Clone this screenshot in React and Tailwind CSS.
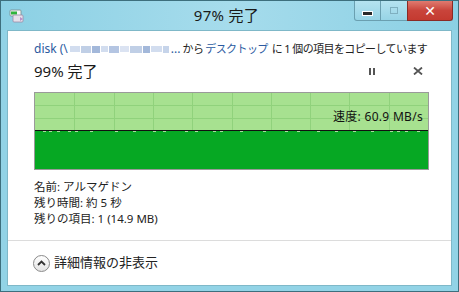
import React from "react";

const F = { fontFamily: '"Noto Sans", "Noto Sans CJK JP", sans-serif' };

function Chart() {
  const w = 393, h = 76, split = 37;
  const vx = [];
  for (let i = 1; i < 10; i++) vx.push(Math.round((w / 10) * i) + 0.5);
  const marks = [8, 14, 22, 33, 40, 55, 80, 98, 118, 128, 150, 160, 178, 185, 205, 228, 250, 262, 282, 300, 318, 336, 355, 362, 370, 382];
  return (
    <svg width={w} height={h} viewBox={`0 0 ${w} ${h}`} className="block">
      <rect x="0" y="0" width={w} height={split} fill="#a7e190" />
      {vx.map((x) => (
        <line key={x} x1={x} y1="0" x2={x} y2={split} stroke="#90d27c" strokeWidth="1" />
      ))}
      <line x1="0" y1="12.5" x2={w} y2="12.5" stroke="#90d27c" strokeWidth="1" />
      <line x1="0" y1="25.5" x2={w} y2="25.5" stroke="#90d27c" strokeWidth="1" />
      <rect x="0" y={split} width={w} height={h - split} fill="#06a823" />
      {marks.map((x) => (
        <rect key={x} x={x} y={split + 1} width="3" height="1" fill="#a8dfa0" />
      ))}
      <line x1="0" y1={split + 0.5} x2={w} y2={split + 0.5} stroke="#111" strokeWidth="1" />
    </svg>
  );
}

export default function App() {
  return (
    <div
      className="w-[459px] h-[292px] flex flex-col border border-[#3d6f7d] bg-[#92d3e6] overflow-hidden"
      style={F}
    >
      {/* Title bar */}
      <div className="h-[29px] shrink-0 grid grid-cols-[1fr_auto_1fr] bg-gradient-to-r from-[#8bd0e4] via-[#a6dcec] to-[#8bd0e4]">
        <div className="flex items-start pl-[8px] pt-[8px]">
          <svg width="16" height="14" viewBox="0 0 16 14">
            <rect x="1" y="1" width="11" height="6" rx="1" fill="#f4f4f4" stroke="#7a8a8a" strokeWidth="0.8" />
            <rect x="2" y="2.5" width="6" height="3" fill="#2fb43a" />
            <rect x="4" y="6" width="10" height="7" rx="1" fill="#e6e0ea" stroke="#9a8aa6" strokeWidth="0.8" />
            <path d="M11 8 L14 10 L11 12 Z" fill="#b890c8" />
          </svg>
        </div>
        <div className="text-[15px] leading-[29px] text-[#1a1a1a] pr-[6px] tracking-[0.3px]">97% 完了</div>
        <div className="flex justify-end items-start pr-[5px]">
          <div className="w-[27px] h-[20px] border border-[#6a9fb0] border-t-0 bg-gradient-to-b from-[#b5e3f0] to-[#97d4e6] rounded-bl-[3px] flex items-center justify-center">
            <div className="w-[9px] h-[3px] bg-[#2a2a2a] mt-[5px] border border-white box-content" />
          </div>
          <div className="w-[26px] h-[20px] border-b border-[#6a9fb0] bg-gradient-to-b from-[#b5e3f0] to-[#97d4e6] flex items-center justify-center">
            <div className="w-[8px] h-[7px] border border-[#7fb0c0]" />
          </div>
          <div className="w-[46px] h-[20px] border border-[#8a2a25] border-t-0 bg-gradient-to-b from-[#e07a70] via-[#c9443b] to-[#c43a30] rounded-br-[3px] flex items-center justify-center">
            <span className="text-white text-[14px] font-bold leading-none" style={{ fontFamily: '"DejaVu Sans", sans-serif' }}>
              ✕
            </span>
          </div>
        </div>
      </div>

      {/* Content */}
      <div className="flex-1 mx-[6px] mb-[5px] bg-white border border-[#7fb8c8] flex flex-col">
        <div className="pl-[26px] pr-[20px] flex-1 flex flex-col">
          <div className="mt-[9px] h-[18px] flex items-center text-[11px] text-[#222] whitespace-nowrap">
            <span className="text-[#2b5aa0] text-[12px]">disk (\</span>
            <span className="flex items-center gap-[1px] ml-[2px] mr-[2px] blur-[0.7px]">
              <span className="w-[10px] h-[6px] bg-[#d2ddef]" />
              <span className="w-[10px] h-[7px] bg-[#c0cfe6]" />
              <span className="w-[8px] h-[7px] bg-[#a3b8da]" />
              <span className="w-[7px] h-[6px] bg-[#d2ddef]" />
              <span className="w-[10px] h-[7px] bg-[#b4c5e2]" />
              <span className="w-[9px] h-[6px] bg-[#dbe3f2]" />
              <span className="w-[12px] h-[7px] bg-[#c0cfe6]" />
              <span className="w-[7px] h-[7px] bg-[#a3b8da]" />
              <span className="w-[11px] h-[6px] bg-[#d2ddef]" />
              <span className="w-[6px] h-[7px] bg-[#c6d4ea]" />
            </span>
            <span className="text-[#2b5aa0] text-[12px] mr-[2px]">...</span>
            <span className="tracking-[-0.6px]">から</span>
            <span className="text-[#2b5aa0] tracking-[-0.6px] ml-[2px]">デスクトップ</span>
            <span className="tracking-[-0.6px] ml-[4px]">に 1 個の項目をコピーしています</span>
          </div>
          <div className="h-[24px] mt-[1px] flex items-center justify-between pr-[6px]">
            <span className="text-[15px] text-[#1a1a1a]">99% 完了</span>
            <div className="flex items-center gap-[38px] mr-[2px]">
              <div className="flex gap-[2px]">
                <div className="w-[2px] h-[7px] bg-[#555]" />
                <div className="w-[2px] h-[7px] bg-[#555]" />
              </div>
              <svg width="10" height="8" viewBox="0 0 10 8">
                <path d="M1 0.5 L9 7.5 M9 0.5 L1 7.5" stroke="#555" strokeWidth="1.8" />
              </svg>
            </div>
          </div>
          <div className="mt-[9px] relative w-[395px] border border-[#9a9a9a]">
            <Chart />
            <div className="absolute right-[5px] top-[16px] text-[12px] leading-[16px] text-[#111] tracking-[0.3px]">速度: 60.9 MB/s</div>
          </div>
          <div className="mt-[9px] text-[11.5px] leading-[16px] text-[#222]">
            <div>名前: アルマゲドン</div>
            <div>残り時間: 約 5 秒</div>
            <div>残りの項目: 1 (14.9 MB)</div>
          </div>
        </div>
        <div className="h-[1px] bg-[#dcdcdc] shrink-0" />
        <div className="h-[44px] shrink-0 pl-[25px] flex items-center gap-[4px]">
          <div className="w-[17px] h-[17px] rounded-full border border-[#8a8a8a] bg-gradient-to-b from-white to-[#e4e4e4] flex items-center justify-center">
            <svg width="9" height="6" viewBox="0 0 9 6">
              <path d="M1 5 L4.5 1.5 L8 5" fill="none" stroke="#333" strokeWidth="1.8" />
            </svg>
          </div>
          <span className="text-[13px] text-[#222]">詳細情報の非表示</span>
        </div>
      </div>
    </div>
  );
}
